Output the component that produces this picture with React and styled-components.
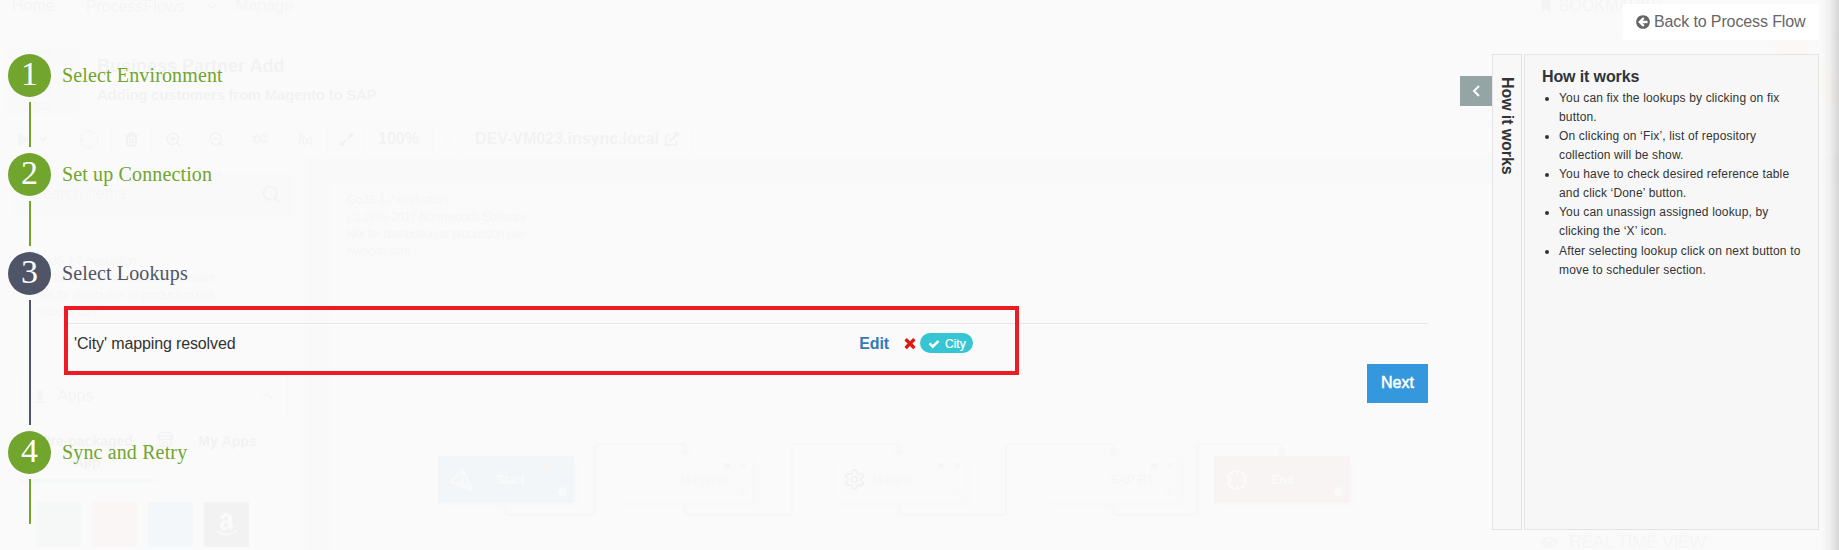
import React from "react";
import styled, { createGlobalStyle } from "styled-components";
import {
  LuChevronDown, LuChevronUp, LuCrosshair, LuTrash2, LuZoomIn, LuZoomOut, LuSearch, LuSettings, LuStore,
} from "react-icons/lu";
import { FaPlay, FaEye, FaBookmark, FaExternalLinkAlt, FaAmazon, FaCogs, FaExpandAlt, FaChessPawn } from "react-icons/fa";

const GlobalStyle = createGlobalStyle`
  * { box-sizing: border-box; }
  body { margin: 0; background: #fafafa; font-family: "Liberation Sans", Arial, sans-serif; overflow: hidden; }
`;

const Screen = styled.div`
  position: relative;
  width: 1839px;
  height: 550px;
  overflow: hidden;
`;

/* ---------- page behind the overlay ---------- */
const Page = styled.div`
  display: flex;
  flex-direction: column;
  height: 550px;
  background: #fafafa;
  color: #333;
`;
const Nav = styled.div`
  display: flex;
  align-items: flex-start;
  height: 36px;
  padding: 0 60px 0 12px;
  border-bottom: 3px solid #ddd;
  font-size: 16px;
  line-height: 12px;
  color: #666;
`;
const NavItem = styled.span`
  display: flex;
  align-items: center;
  gap: ${(p) => p.$gap || 0}px;
  margin-right: ${(p) => p.$after || 0}px;
  margin-left: ${(p) => (p.$push ? "auto" : 0)};
`;
const Heading = styled.div`
  display: flex;
  height: 85px;
  padding: 10px 0 6px 5px;
  gap: 18px;
`;
const FlowThumb = styled.div`
  width: 74px;
  background: #ddd;
  display: flex;
  flex-direction: column;
  align-items: center;
  justify-content: space-around;
`;
const ThumbBox = styled.i`
  width: 18px;
  height: 8px;
  border: 2px solid #aaa;
`;
const Titles = styled.div`
  display: flex;
  flex-direction: column;
  font-weight: bold;
`;
const Title = styled.div`
  margin-top: 10px;
  font-size: 18px;
  line-height: 20px;
`;
const Subtitle = styled.div`
  margin-top: 9px;
  font-size: 15px;
  line-height: 20px;
  letter-spacing: -0.25px;
`;
const Toolbar = styled.div`
  display: flex;
  height: 38px;
  padding-bottom: 2px;
  border-top: 1px solid #ccc;
  border-bottom: 1px solid #ccc;
  font-size: 16px;
  font-weight: bold;
`;
const Tool = styled.div`
  width: ${(p) => p.$w}px;
  display: flex;
  align-items: center;
  justify-content: center;
  gap: 6px;
  border-right: 1px solid #bbb;
`;
const FnLabel = styled.span`
  font-size: 10px;
  letter-spacing: -0.5px;
  color: #666;
  i { font-size: 14px; }
`;
const Workspace = styled.div`
  flex: 1;
  display: flex;
  min-height: 0;
`;
const Sidebar = styled.div`
  width: 307px;
  padding: 13px 13px 0 14px;
  border-right: 1px solid #ddd;
`;
const Search = styled.div`
  display: flex;
  align-items: center;
  justify-content: space-between;
  height: 44px;
  padding: 0 12px 0 18px;
  background: #e4e4e4;
  font-size: 16px;
  color: #777;
`;
const Evaluation = styled.div`
  font-size: 12px;
  line-height: 17px;
  letter-spacing: -0.4px;
  color: #777;
`;
const SidebarNote = styled(Evaluation)`
  height: 159px;
  padding: 37px 0 0 22px;
`;
const Apps = styled.div`
  display: flex;
  align-items: center;
  gap: 10px;
  height: 42px;
  width: 268px;
  margin-left: 6px;
  padding: 0 12px;
  border: 1px solid #ccc;
  font-size: 16px;
  color: #666;
  svg:last-child { margin-left: auto; }
`;
const Tabs = styled.div`
  display: flex;
  width: 268px;
  margin-left: 6px;
  height: 66px;
  font-size: 14px;
  font-weight: bold;
  text-align: center;
  line-height: 21px;
`;
const Tab = styled.div`
  width: 134px;
  padding: ${(p) => (p.$active ? "14px 0 0 0" : "14px 28px 0 0")};
  display: flex;
  justify-content: center;
  gap: 24px;
  border-bottom: ${(p) => (p.$active ? "4px solid #7fc4de" : "1px solid #ccc")};
`;
const Tiles = styled.div`
  display: flex;
  gap: 11px;
  padding: 19px 0 0 22px;
`;
const Tile = styled.div`
  width: 45px;
  height: 45px;
  display: flex;
  align-items: center;
  justify-content: center;
  background: ${(p) => p.$c};
  color: #fff;
`;
const Canvas = styled.div`
  flex: 1;
  padding: 24px 0 0 23px;
  background: #e2e2e2;
`;
const Paper = styled.div`
  position: relative;
  height: 370px;
  padding: 9px 17px;
  background: #fafafa;
`;
const Diagram = styled.svg`
  position: absolute;
  left: 90px;
  top: 250px;
`;
const Node = styled.div`
  position: absolute;
  left: ${(p) => p.$x}px;
  top: 273px;
  width: 136px;
  height: 47px;
  padding-left: ${(p) => p.$pad || 30}px;
  display: flex;
  align-items: center;
  gap: 6px;
  border: 2px solid ${(p) => p.$bg || "#ddd"};
  box-shadow: 4px 4px 2px #ddd;
  background: ${(p) => p.$bg || "#fcfcfc"};
  color: ${(p) => (p.$bg ? "#fff" : "#777")};
  font-size: 12px;
  letter-spacing: 0.3px;
  font-weight: ${(p) => (p.$bg ? "bold" : "normal")};
`;
const NodeLabel = styled.span`
  margin-left: 17px;
`;
const Dots = styled.span`
  position: absolute;
  right: 4px;
  top: 4px;
  display: flex;
  gap: 9px;
  align-items: center;
  color: #d66;
  font: bold 10px/8px "DejaVu Sans", sans-serif;
  &::before { content: ""; width: 6px; height: 6px; border-radius: 50%; background: #d66; }
`;
const Info = styled.i`
  position: absolute;
  right: 5px;
  bottom: 5px;
  width: 9px;
  height: 9px;
  border-radius: 50%;
  background: ${(p) => (p.$light ? "#fff" : "#ddd")};
`;
const LiveView = styled.div`
  position: absolute;
  left: 1541px;
  top: 532px;
  display: flex;
  align-items: center;
  gap: 11px;
  font-size: 18px;
  line-height: 20px;
  letter-spacing: -0.6px;
  color: #777;
`;
const Ribbon = styled.svg`
  position: absolute;
  left: 1768px;
  top: 41px;
`;

/* ---------- overlay ---------- */
const Overlay = styled.div`
  position: absolute;
  inset: 0;
  display: flex;
  justify-content: space-between;
  padding: 4px 20px 0 8px;
  background: rgba(250, 250, 250, 0.96);
`;
const EdgeShade = styled.div`
  position: absolute;
  top: 0;
  right: 0;
  width: 18px;
  height: 550px;
  background: linear-gradient(to right, rgba(0, 0, 0, 0), rgba(0, 0, 0, 0.035) 45%, rgba(0, 0, 0, 0.15));
`;
const Steps = styled.div`
  width: 1420px;
  padding-top: 50px;
`;
const Step = styled.section`
  display: flex;
  gap: 12px;
  height: ${(p) => (p.$active ? 179 : 99)}px;
  color: ${(p) => (p.$active ? "#4f5566" : "#71a52e")};
`;
const Track = styled.div`
  display: flex;
  flex-direction: column;
  align-items: center;
  width: 43px;
  padding-bottom: 6px;
`;
const Circle = styled.div`
  width: 43px;
  height: 43px;
  flex: none;
  border-radius: 50%;
  background: currentColor;
  margin-bottom: 5px;
  text-align: center;
`;
const Digit = styled.span`
  font: 34px/39px "Liberation Serif", "Times New Roman", serif;
  color: #fff;
`;
const Line = styled.div`
  flex: 1;
  width: 2px;
  background: currentColor;
`;
const StepBody = styled.div`
  flex: 1;
  min-width: 0;
`;
const StepName = styled.div`
  margin-left: -1px;
  padding: 9px 0 1px;
  font: 20px/24px "Liberation Serif", "Times New Roman", serif;
  letter-spacing: 0.14px;
`;
const Highlight = styled.div`
  position: relative;
  width: 955px;
  height: 69px;
  margin: 20px 0 0 1px;
  border: 4px solid #ed1c24;
`;
const Lookup = styled.div`
  display: flex;
  flex-direction: column;
  position: relative;
`;
const Rule = styled.div`
  position: absolute;
  top: 37px;
  left: 5px;
  width: 1360px;
  height: 1px;
  background: #e6e8e9;
`;
const LookupRow = styled.div`
  display: flex;
  align-items: center;
  height: 20px;
  margin: 23px 42px 0 6px;
  font-size: 16px;
  color: #333;
`;
const LookupText = styled.span`
  padding-top: 2px;
  letter-spacing: -0.13px;
`;
const Edit = styled.a`
  margin-left: auto;
  margin-right: 13px;
  padding-top: 1px;
  font-weight: bold;
  letter-spacing: -0.1px;
  color: #337ab7;
`;
const Pill = styled.span`
  display: flex;
  align-items: center;
  gap: 5px;
  width: 53px;
  height: 20px;
  margin-left: 2px;
  padding: 1px 0 0 8px;
  border-radius: 10px;
  background: #36c6d3;
  color: #fff;
  font-size: 12px;
  -webkit-text-stroke: 0.2px #fff;
`;
const Next = styled.button`
  align-self: flex-end;
  position: relative;
  width: 61px;
  height: 39px;
  margin-top: -11px;
  padding: 0 0 2px;
  border: 0;
  background: #3598dc;
  color: #fff;
  font: 16px "Liberation Sans", Arial, sans-serif;
  -webkit-text-stroke: 0.5px #fff;
`;
const Side = styled.div`
  display: flex;
  flex-direction: column;
  align-items: flex-end;
  width: 359px;
  flex: none;
`;
const Back = styled.button`
  display: flex;
  align-items: center;
  gap: 3px;
  width: 196px;
  height: 36px;
  padding: 0 0 1px 12px;
  border: 0;
  background: #fff;
  color: #666;
  font: 16px "Liberation Sans", Arial, sans-serif;
  letter-spacing: -0.12px;
  white-space: nowrap;
`;
const Help = styled.div`
  display: flex;
  margin-top: 14px;
  height: 476px;
`;
const Toggle = styled.button`
  width: 32px;
  height: 30px;
  margin-top: 22px;
  padding: 0;
  border: 0;
  background: #95a5a6;
  display: flex;
  align-items: center;
  justify-content: center;
`;
const HelpTab = styled.div`
  width: 30px;
  padding-top: 22px;
  border: 1px solid #e4e4e4;
  background: #f8f8f8;
  writing-mode: vertical-rl;
  font-size: 16px;
  line-height: 28px;
  font-weight: bold;
  letter-spacing: -0.1px;
  color: #333;
`;
const HelpPanel = styled.div`
  width: 295px;
  margin-left: 2px;
  padding: 12px 5px 0 17px;
  border: 1px solid #e4e4e4;
  background: #f7f7f7;
`;
const HelpTitle = styled.div`
  font-size: 16px;
  font-weight: bold;
  line-height: 20px;
  letter-spacing: -0.12px;
  color: #2f353b;
`;
const HelpList = styled.ul`
  margin: 0;
  padding: 2px 0 0 17px;
  font-size: 12px;
  line-height: 19px;
  letter-spacing: 0.16px;
  color: #333;
`;
const HelpItem = styled.li`
  white-space: pre-line;
  &:last-child { margin-top: 1px; }
`;

const Glyph = ({ size, d, color }) => (
  <svg width={size} height={size} viewBox="0 0 1792 1792" fill={color || "currentColor"}><path d={d} /></svg>
);
const TIMES = "M1490 1322q0 40-28 68l-136 136q-28 28-68 28t-68-28l-294-294-294 294q-28 28-68 28t-68-28l-136-136q-28-28-28-68t28-68l294-294-294-294q-28-28-28-68t28-68l136-136q28-28 68-28t68 28l294 294 294-294q28-28 68-28t68 28l136 136q28 28 28 68t-28 68l-294 294 294 294q28 28 28 68z";
const CHECK = "M1671 566q0 40-28 68l-724 724-136 136q-28 28-68 28t-68-28l-136-136-362-362q-28-28-28-68t28-68l136-136q28-28 68-28t68 28l294 295 656-657q28-28 68-28t68 28l136 136q28 28 28 68z";
const ARROW_LEFT = "M1408 960v-128q0-26-19-45t-45-19h-502l189-189q19-19 19-45t-19-45l-91-91q-18-18-45-18t-45 18l-362 362-91 91q-18 18-18 45t18 45l91 91 362 362q18 18 45 18t45-18l91-91q18-18 18-45t-18-45l-189-189h502q26 0 45-19t19-45zm256-64q0 209-103 385.5t-279.5 279.5-385.5 103-385.5-103-279.5-279.5-103-385.5 103-385.5 279.5-279.5 385.5-103 385.5 103 279.5 279.5 103 385.5z";

const LINKS = [[85, 175, 265], [265, 372, 479], [479, 586, 693], [693, 777, 862]];
const HELP = [
  "You can fix the lookups by clicking on fix\nbutton.",
  "On clicking on ‘Fix’, list of repository\ncollection will be show.",
  "You have to check desired reference table\nand click ‘Done’ button.",
  "You can unassign assigned lookup, by\nclicking the ‘X’ icon.",
  "After selecting lookup click on next button to\nmove to scheduler section.",
];

const GoJs = () => (
  <>GoJS 1.7 evaluation<br />(c) 1998-2017 Northwoods Software<br />Not for distribution or production use<br />nwoods.com</>
);

function ProcessFlowPage() {
  return (
    <Page>
      <Nav>
        <NavItem $after={31}>Home</NavItem>
        <NavItem $gap={20} $after={16}>ProcessFlows <LuChevronDown size={14} /></NavItem>
        <NavItem>Manage</NavItem>
        <NavItem $push $gap={7} $after={117}><FaBookmark size={12} />BOOKMARKS</NavItem>
      </Nav>
      <Heading>
        <FlowThumb><ThumbBox /><ThumbBox /><ThumbBox /><ThumbBox /></FlowThumb>
        <Titles>
          <Title>Business Partner Add</Title>
          <Subtitle>Adding customers from Magento to SAP</Subtitle>
        </Titles>
      </Heading>
      <Toolbar>
        <Tool $w={67}><FaPlay size={13} color="#777" /><LuChevronDown size={14} /></Tool>
        <Tool $w={45}><LuCrosshair size={21} strokeWidth={1} /></Tool>
        <Tool $w={40}><LuTrash2 size={15} strokeWidth={3} /></Tool>
        <Tool $w={43}><LuZoomIn size={17} /></Tool>
        <Tool $w={43}><LuZoomOut size={17} /></Tool>
        <Tool $w={45}><FaCogs size={16} color="#888" /></Tool>
        <Tool $w={45}><FnLabel><i>f</i>(x)</FnLabel></Tool>
        <Tool $w={37}><FaExpandAlt size={15} /></Tool>
        <Tool $w={68}>100%</Tool>
        <Tool $w={30}><LuChevronDown size={12} /></Tool>
        <Tool $w={229}>DEV-VM023.insync.local<FaExternalLinkAlt size={14} /></Tool>
      </Toolbar>
      <Workspace>
        <Sidebar>
          <Search>Search Items<LuSearch size={20} color="#333" /></Search>
          <SidebarNote><GoJs /></SidebarNote>
          <Apps><FaChessPawn size={14} />Apps<LuChevronUp size={16} /></Apps>
          <Tabs>
            <Tab $active><span>Pre-packaged<br />App</span></Tab>
            <Tab><LuStore size={17} /><span>My&nbsp;Apps</span></Tab>
          </Tabs>
          <Tiles>
            <Tile $c="#7fce97" /><Tile $c="#f3a07a" /><Tile $c="#62b9ea" />
            <Tile $c="#444"><FaAmazon size={25} /></Tile>
          </Tiles>
        </Sidebar>
        <Canvas>
          <Paper>
            <Evaluation><GoJs /></Evaluation>
            <Diagram width="960" height="100" fill="none" stroke="#aaa" strokeWidth="2">
              {LINKS.map(([a, b, c]) => (
                <g key={a}>
                  <path d={`M${a} 72V78q0 4 4 4H${b - 4}q4 0 4-4V15q0-4 4-4H${c - 4}q4 0 4 4V20`} />
                  <path d={`M${c - 4} 16l4 3 4-3-4 8z`} fill="#aaa" />
                  <circle cx={a} cy="72" r="4" fill="#aaa" stroke="none" />
                </g>
              ))}
            </Diagram>
            <Node $x={108} $bg="#3d9fc4" $pad={10}>
              <svg width="23" height="24" fill="none" stroke="#fff" strokeWidth="1.5"><path d="M12 1L1 14l21 8zL13 15l9 7M13 15L1 14" /></svg>
              <NodeLabel>Start</NodeLabel><Dots>×</Dots><Info $light />
            </Node>
            <Node $x={288} $pad={60}>Magento<Dots>×</Dots><Info /></Node>
            <Node $x={502} $pad={9}><LuSettings size={23} color="#333" />Mapper<Dots>×</Dots><Info /></Node>
            <Node $x={715} $pad={63}>SAP B1<Dots>×</Dots><Info /></Node>
            <Node $x={884} $bg="#d87060" $pad={10}><LuCrosshair size={22} /><NodeLabel>End</NodeLabel><Info $light /></Node>
          </Paper>
        </Canvas>
      </Workspace>
      <Ribbon width="71" height="75"><path d="M0 0H34L67 34V69z" fill="#f4d878" /></Ribbon>
      <LiveView><FaEye size={17} />REAL TIME VIEW</LiveView>
    </Page>
  );
}

function StepItem({ n, name, active, children }) {
  return (
    <Step $active={active}>
      <Track><Circle><Digit>{n}</Digit></Circle><Line /></Track>
      <StepBody><StepName>{name}</StepName>{children}</StepBody>
    </Step>
  );
}

export default function App() {
  return (
    <Screen>
      <GlobalStyle />
      <ProcessFlowPage />
      <Overlay>
        <Steps>
          <StepItem n={1} name="Select Environment" />
          <StepItem n={2} name="Set up Connection" />
          <StepItem n={3} name="Select Lookups" active>
            <Lookup>
              <Rule />
              <Highlight>
                <LookupRow>
                  <LookupText>'City' mapping resolved</LookupText>
                  <Edit>Edit</Edit>
                  <Glyph size={16} d={TIMES} color="#dd1b16" />
                  <Pill><Glyph size={12} d={CHECK} />City</Pill>
                </LookupRow>
              </Highlight>
              <Next>Next</Next>
            </Lookup>
          </StepItem>
          <StepItem n={4} name="Sync and Retry" />
        </Steps>
        <Side>
          <Back><Glyph size={16} d={ARROW_LEFT} />Back to Process Flow</Back>
          <Help>
            <Toggle>
              <svg width="8" height="12" fill="none" stroke="#fff" strokeWidth="2"><path d="M7 1L2 6l5 5" /></svg>
            </Toggle>
            <HelpTab>How it works</HelpTab>
            <HelpPanel>
              <HelpTitle>How it works</HelpTitle>
              <HelpList>{HELP.map((t) => <HelpItem key={t}>{t}</HelpItem>)}</HelpList>
            </HelpPanel>
          </Help>
        </Side>
        <EdgeShade />
      </Overlay>
    </Screen>
  );
}
